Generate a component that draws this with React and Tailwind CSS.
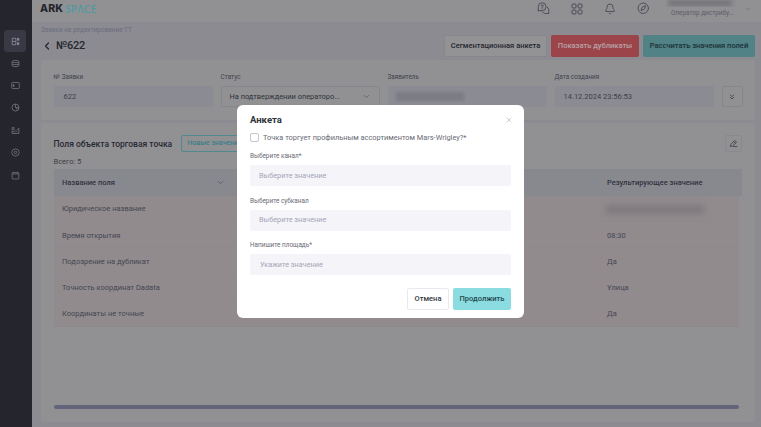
import React from "react";
import {
  ChevronLeft,
  ChevronDown,
  ChevronsDown,
  Bell,
  Compass,
  X,
} from "lucide-react";

const rows = [
  ["Юридическое название", null],
  ["Время открытия", "08:30"],
  ["Подозрение на дубликат", "Да"],
  ["Точность координат Dadata", "Улица"],
  ["Координаты не точные", "Да"],
];

function Glyph({ children }) {
  return (
    <svg viewBox="0 0 10 10" fill="none" stroke="currentColor" strokeWidth="0.9" strokeLinejoin="round" className="size-[9px]">
      {children}
    </svg>
  );
}

function DashboardIcon() {
  return (
    <Glyph>
      <path d="M5.4 1.4H1.4v7.2h4M5.4 1.4v7.2M1.4 5h4" />
      <path d="M7.2 1.5h1.5v2.2H7.2zM7.2 6.3h1.5v2.2H7.2z" fill="currentColor" />
    </Glyph>
  );
}

function StackIcon() {
  return (
    <Glyph>
      <rect x="1.2" y="1.6" width="7.6" height="6.8" rx="2" />
      <path d="M1.2 4h7.6M1.2 6.2h7.6" />
    </Glyph>
  );
}

function PanelIcon() {
  return (
    <Glyph>
      <rect x="0.8" y="1.6" width="8.4" height="6.8" rx="0.8" />
      <path d="M2.8 3.6v2.8" strokeWidth="1.6" />
    </Glyph>
  );
}

function ChartIcon() {
  return (
    <Glyph>
      <circle cx="5" cy="5" r="3.9" />
      <path d="M5 1.2V5l2.8 2.6M5 5h3.8" />
    </Glyph>
  );
}

function PeopleIcon() {
  return (
    <Glyph>
      <path d="M1.2 1.8h2.3v2.3H1.2zM1.2 8.4V5.6l2.4 1.2 1.8-1.6 1.6 1.4M1.2 8.4h7.5V2.4L6.6 4.6" />
    </Glyph>
  );
}

function SettingsIcon() {
  return (
    <Glyph>
      <path d="M5 .9 8.2 2.2 9.2 5 8.2 7.8 5 9.1 1.8 7.8.8 5l1-2.8Z" />
      <circle cx="5" cy="5" r="1.5" />
    </Glyph>
  );
}

function CalendarIcon() {
  return (
    <Glyph>
      <rect x="1.3" y="1.9" width="7.4" height="7" rx="0.6" />
      <path d="M1.3 3.3h7.4M3 .9v1.4M7 .9v1.4" />
    </Glyph>
  );
}

function GridIcon() {
  return (
    <svg viewBox="0 0 12 12" fill="none" stroke="currentColor" className="size-[12px]">
      <rect x="1" y="1" width="4" height="4" rx="1" />
      <rect x="7" y="1" width="4" height="4" rx="1" />
      <rect x="1" y="7" width="4" height="4" rx="1" />
      <rect x="7" y="7" width="4" height="4" rx="1" />
    </svg>
  );
}

function HelpChatIcon() {
  return (
    <svg viewBox="0 0 14 14" fill="none" stroke="currentColor" strokeWidth="1" strokeLinecap="round" strokeLinejoin="round" className="size-[13px]">
      <path d="M1.4 9.2V5a4.2 4.2 0 1 1 4.2 4.3H1.4Z" />
      <path d="M10.8 5.3a3.7 3.7 0 0 1 1.9 3.2v3.9H9a3.8 3.8 0 0 1-3.3-1.9" />
      <path d="M4.5 4.2a1.1 1.1 0 1 1 1.5 1c-.3.2-.4.3-.4.7M5.6 7.3v.1" />
    </svg>
  );
}

function EditIcon() {
  return (
    <svg viewBox="0 0 10 10" fill="none" stroke="currentColor" strokeWidth="1" strokeLinejoin="round" className="size-[9px]">
      <path d="M1.4 8.2 2 6 6.4 1.7l2 1.9L4 7.8ZM5.2 3l2 1.9M4.6 8.4h4.6" />
    </svg>
  );
}

function Sidebar() {
  const icons = [StackIcon, PanelIcon, ChartIcon, PeopleIcon, SettingsIcon, CalendarIcon];
  return (
    <aside className="flex w-8 shrink-0 flex-col items-center bg-[#25262d] pt-[30px] pr-[2px] text-[#73747c]">
      <div className="flex h-[22px] w-[22px] items-center justify-center rounded-[3px] bg-[#383944] text-[#8d8e98]">
        <DashboardIcon />
      </div>
      {icons.map((Icon, i) => (
        <div key={i} className="flex h-[22.4px] items-center justify-center">
          <Icon />
        </div>
      ))}
    </aside>
  );
}

function Header() {
  return (
    <header className="flex h-[22px] items-start bg-[#919194] pl-[8px] text-[#494b56]">
      <div className="flex pt-[2px] text-[10.5px] leading-[14px]">
        <span className="w-[25px] font-['Inter',sans-serif] font-extrabold tracking-[0.1px] text-[#25262b]">ARK</span>
        <span className="font-['Open_Sans',sans-serif] text-[10.5px] font-semibold text-[#529aa1]">SPΛCE</span>
      </div>
      <div className="ml-auto flex items-center pt-[2px]">
        <span className="flex w-[33px] justify-center"><HelpChatIcon /></span>
        <span className="flex w-[33px] justify-center"><GridIcon /></span>
        <span className="flex w-[34px] justify-center"><Bell className="size-[12px]" strokeWidth={1.8} /></span>
        <span className="flex w-[33px] justify-center"><Compass className="size-[12.5px]" strokeWidth={1.8} /></span>
      </div>
      <div className="ml-[6px] w-[78px]">
        <div className="h-[7px] overflow-hidden">
          <div className="ml-[2px] h-[6px] w-[64px] bg-[#747479] blur-[2px]" />
        </div>
        <div className="pl-[5px] text-[6.4px] leading-[12px] whitespace-nowrap text-[#5c5d68]">Оператор дистрибу...</div>
      </div>
      <ChevronDown className="mt-[5px] mr-[9px] size-[8px] text-[#696b77]" />
    </header>
  );
}

function TitleRow() {
  return (
    <div>
      <div className="pt-[3px] text-[6.4px] leading-[11px] text-[#6b6d7b]">Заявки на редактирование ТТ</div>
      <div className="flex h-[20px] items-center whitespace-nowrap">
        <ChevronLeft className="size-[12px] text-[#25272f]" strokeWidth={2.6} />
        <h1 className="ml-[3px] pt-[1px] text-[11px] font-medium tracking-[-0.25px] text-[#25272f]">№622</h1>
        <div className="ml-auto flex text-[7.5px] font-medium">
          <button className="h-[22px] w-[103px] rounded-[2px] border border-[#87878e] bg-[#939396] text-[#24262e]">Сегментационная анкета</button>
          <button className="ml-[4px] h-[22px] w-[88px] rounded-[2px] bg-[#9b444a] text-[#b6a3a7]">Показать дубликаты</button>
          <button className="ml-[4px] h-[22px] w-[112px] rounded-[2px] bg-[#508286] text-[#1c3135]">Рассчитать значения полей</button>
        </div>
      </div>
    </div>
  );
}

function Field({ label, children, outlined }) {
  return (
    <div className="w-[159px]">
      <div className="h-[15px] text-[6.4px] leading-[12px] text-[#40424c]">{label}</div>
      <div
        className={
          outlined
            ? "flex h-[21px] items-center rounded-[2px] border border-[#85858e] px-[8px] text-[7.4px] text-[#30323a]"
            : "flex h-[21px] items-center rounded-[2px] bg-[#8b8b93] px-[9px] text-[7.5px] text-[#3c3e48]"
        }
      >
        {children}
      </div>
    </div>
  );
}

function InfoCard() {
  return (
    <section className="mt-[4px] flex h-[60px] gap-[8px] rounded-[3px] bg-[#919194] pt-[11px] pl-[12.5px]">
      <Field label="№ Заявки"><span className="pl-[1px]">622</span></Field>
      <Field label="Статус" outlined>
        <span>На подтверждении операторо...</span>
        <ChevronDown className="ml-auto size-[9px] text-[#555763]" />
      </Field>
      <Field label="Заявитель">
        <span className="-ml-[1px] h-[9px] w-[68px] bg-[#7c7c84] blur-[1.5px]" />
      </Field>
      <Field label="Дата создания">14.12.2024 23:56:53</Field>
      <button className="mt-[15px] flex h-[21px] w-[21px] items-center justify-center rounded-[2px] border border-[#85858c] text-[#3c3e48]">
        <ChevronsDown className="size-[8px]" strokeWidth={2.5} />
      </button>
    </section>
  );
}

function FieldsCard() {
  return (
    <section className="mt-[3px] flex h-[299px] flex-col rounded-[3px] bg-[#919194] pt-[12px] pr-[13px] pl-[12.5px]">
      <div className="flex h-[17px] items-center whitespace-nowrap">
        <h2 className="w-[127px] pt-[1px] text-[8.5px] font-medium text-[#272932]">Поля объекта торговая точка</h2>
        <button className="h-[17px] w-[84px] rounded-[2px] border border-[#4f888e] text-left text-[7px] font-medium text-[#397e86]">
          <span className="pl-[6px]">Новые значения</span>
        </button>
        <button className="ml-auto flex size-[17px] items-center justify-center rounded-[2px] border border-[#89898e] text-[#42444d]">
          <EditIcon />
        </button>
      </div>
      <div className="h-[17px] pt-[3px] text-[7.5px] leading-[13px] text-[#3c3e47]">Всего: 5</div>
      <div className="flex h-[27px] items-center bg-[#88898f] text-[7.5px] text-[#30323e]">
        <span className="w-[155px] pl-[8.5px] font-medium">Название поля</span>
        <ChevronDown className="ml-[7px] size-[9px] text-[#575966]" />
        <span className="ml-auto w-[135px] font-medium">Результирующее значение</span>
      </div>
      <div className="mr-[3px]">
        {rows.map(([name, value]) => (
          <div key={name} className="flex h-[26.2px] items-center border-b border-[#8e898c] bg-[#918b8e] pt-[1px] text-[7.5px] text-[#454650]">
            <span className="pl-[8.5px]">{name}</span>
            <span className="ml-auto w-[132px]">
              {value ?? <span className="-ml-[1px] block h-[9px] w-[98px] bg-[#7f797d] blur-[3px]" />}
            </span>
          </div>
        ))}
      </div>
      <div className="mt-auto mr-[3px] mb-[13px] h-[4px] shrink-0 rounded-full bg-[#63637a]" />
    </section>
  );
}

function ModalField({ label, placeholder, inset }) {
  return (
    <div className="h-[44.6px]">
      <div className="h-[14px] text-[6.4px] leading-[11px] text-[#686a75]">{label}</div>
      <div className={`flex h-[21px] items-center rounded-[2px] bg-[#f4f4f9] pt-[1px] text-[7.3px] text-[#a4a6b7] ${inset ? "pl-[10px]" : "pl-[9px]"}`}>
        {placeholder}
      </div>
    </div>
  );
}

function Modal() {
  return (
    <div role="dialog" className="absolute top-[105px] left-[237px] h-[213px] w-[287px] rounded-[6px] bg-white px-[13px] pt-[8px]">
      <div className="flex h-[13px] items-center justify-between">
        <h2 className="pt-[1px] text-[9.5px] font-bold text-[#30323a]">Анкета</h2>
        <X className="-mr-[2px] size-[8px] text-[#b4b6c2]" strokeWidth={2} />
      </div>
      <label className="mt-[5px] flex h-[13px] items-center whitespace-nowrap">
        <span className="size-[9px] rounded-[2px] border border-[#c3c5d0] bg-white" />
        <span className="ml-[4px] text-[7.4px] text-[#686a74]">Точка торгует профильным ассортиментом Mars-Wrigley?*</span>
      </label>
      <div className="pt-[7px]">
        <ModalField label="Выберите канал*" placeholder="Выберите значение" />
        <ModalField label="Выберите субканал" placeholder="Выберите значение" />
        <ModalField label="Напишите площадь*" placeholder="Укажите значение" inset />
      </div>
      <div className="flex justify-end gap-[4px] pt-[3px] text-[7.5px] font-medium">
        <button className="h-[22px] w-[42px] rounded-[2px] border border-[#e9e9f1] bg-white text-[#34363e]">Отмена</button>
        <button className="h-[22px] w-[58px] rounded-[2px] bg-[#8adce1] text-[#25474e]">Продолжить</button>
      </div>
    </div>
  );
}

export default function App() {
  return (
    <div className="relative flex h-[427px] w-[761px] overflow-hidden bg-[#8c8b92] font-['Roboto',sans-serif]">
      <Sidebar />
      <div className="flex-1">
        <Header />
        <main className="pr-[6px] pl-[9px]">
          <TitleRow />
          <InfoCard />
          <FieldsCard />
        </main>
      </div>
      <Modal />
    </div>
  );
}
